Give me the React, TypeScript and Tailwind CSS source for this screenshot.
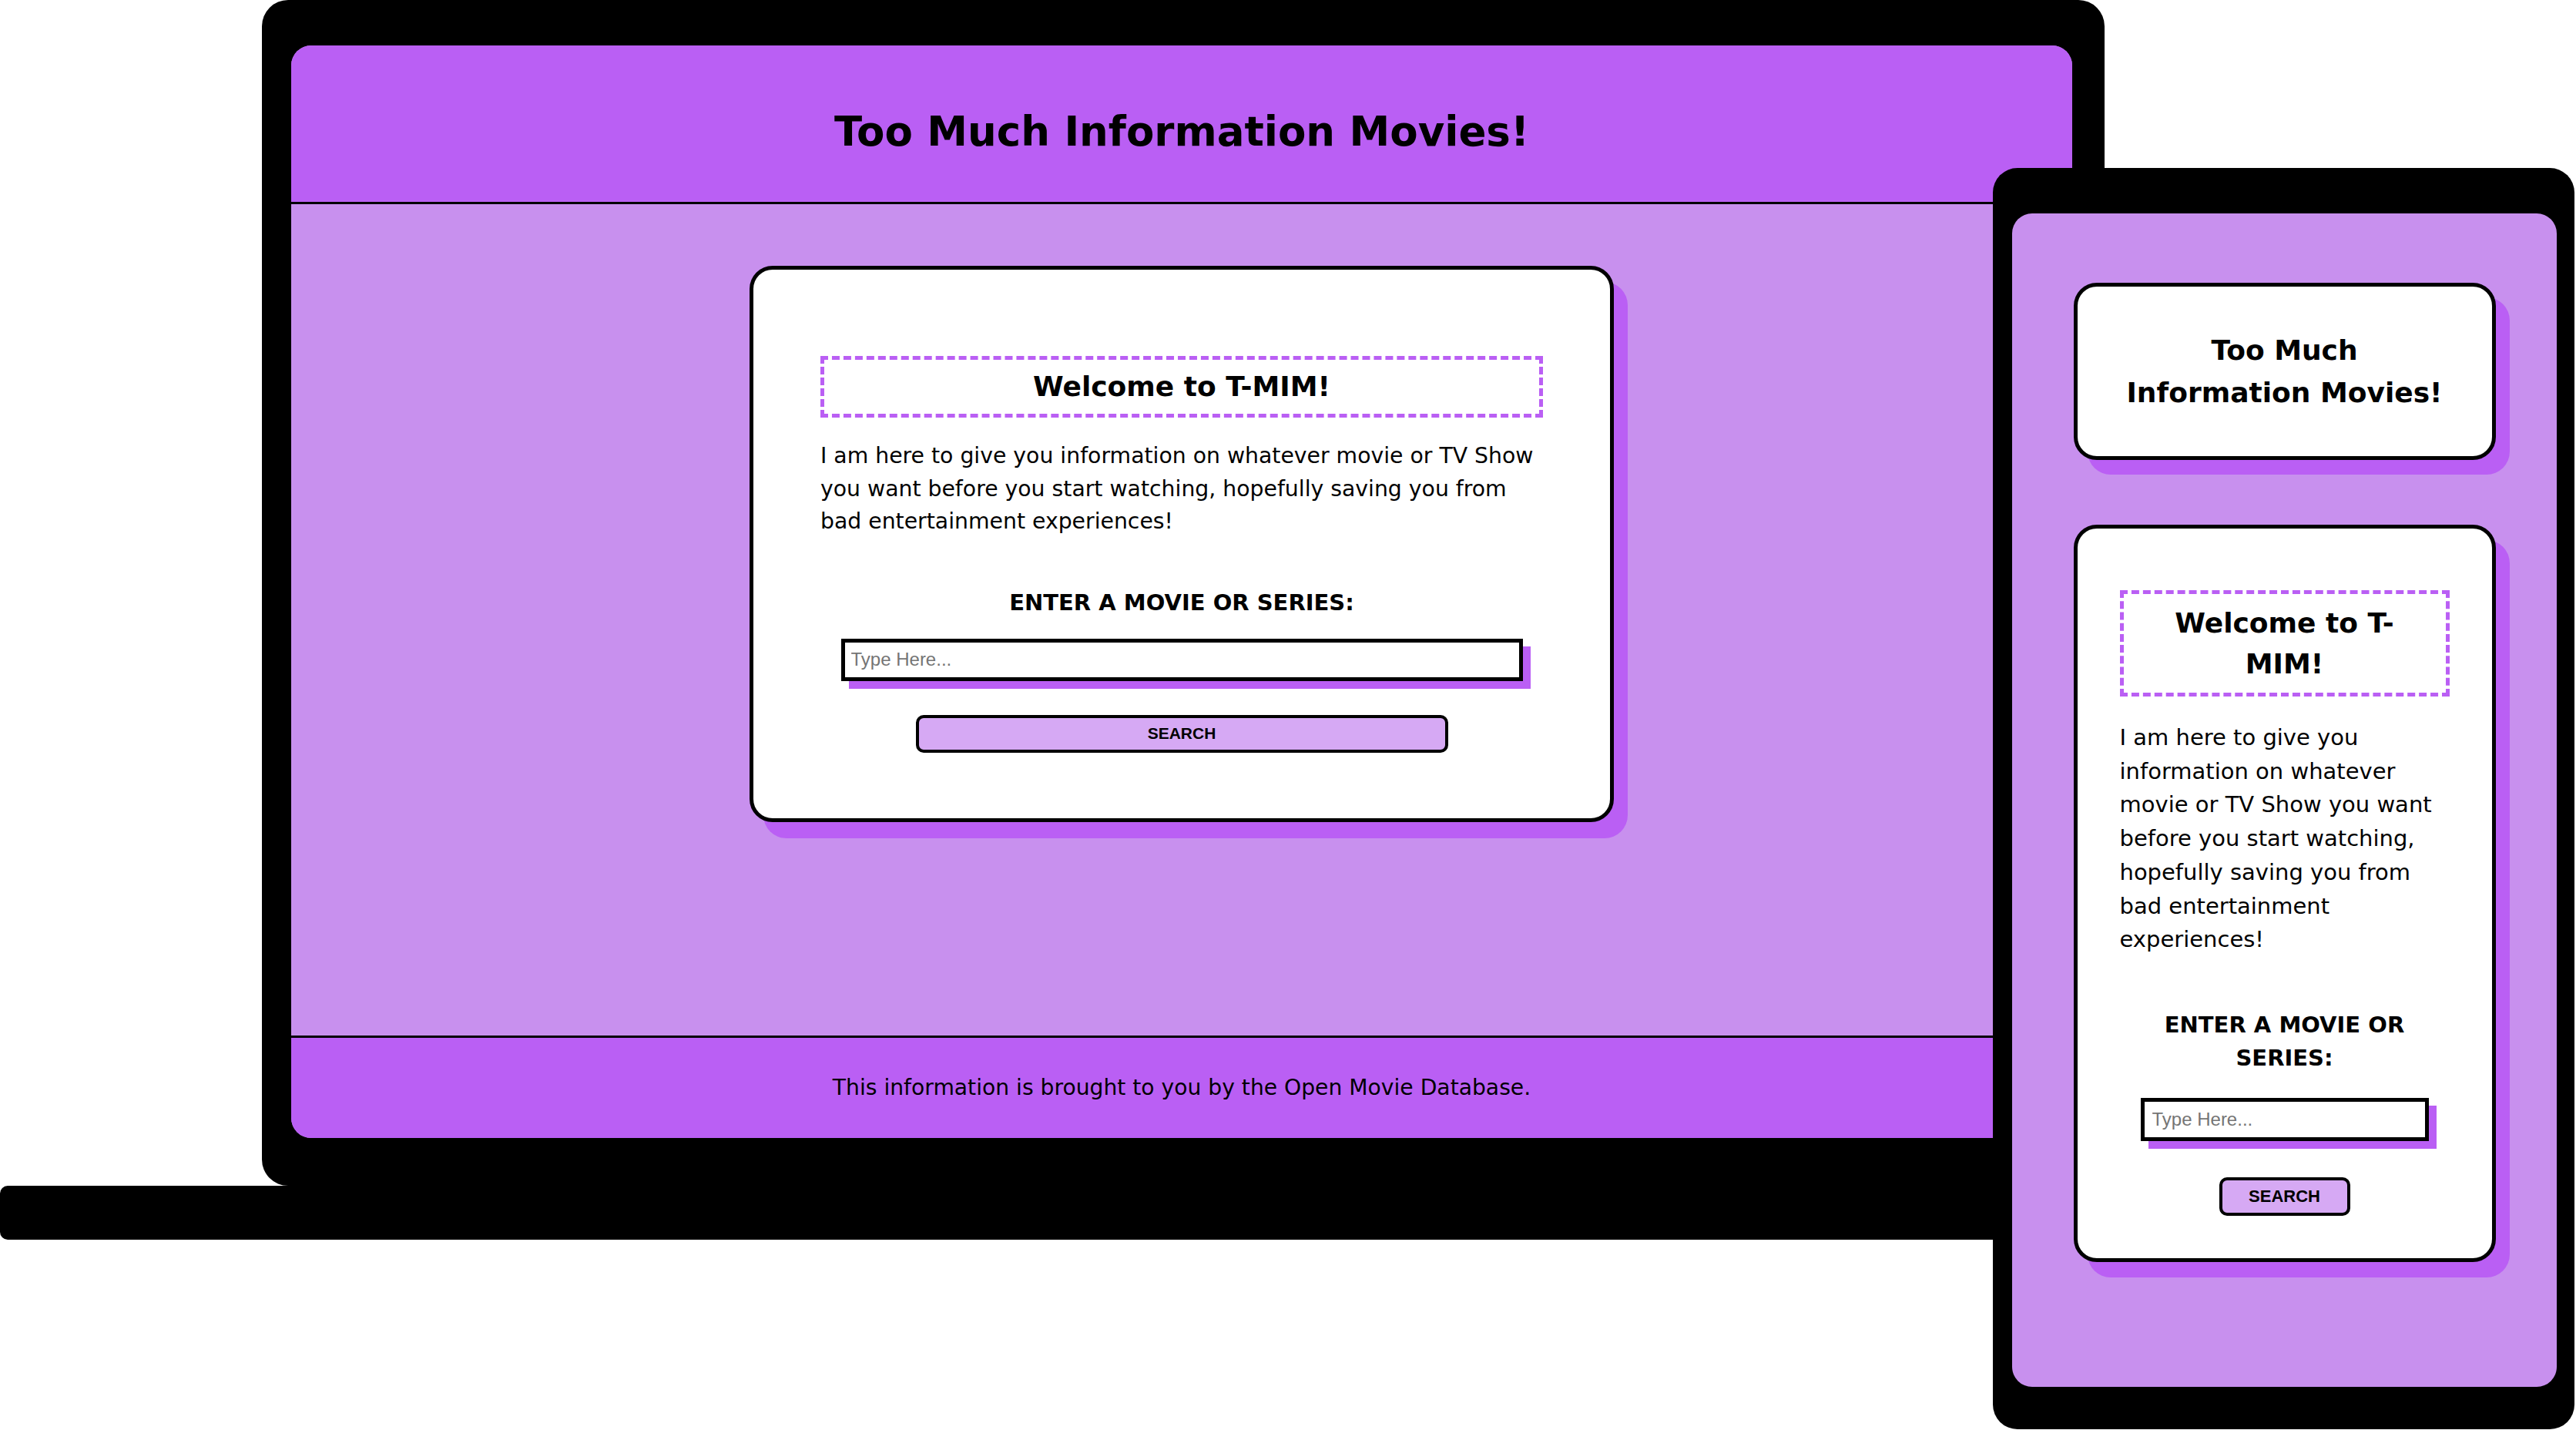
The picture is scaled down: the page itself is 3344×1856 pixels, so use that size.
import React from "react";

function LaptopCard() {
  return (
    <div className="flex w-[1122px] flex-col items-center self-start rounded-[30px] border-[5px] border-black bg-white px-[87px] pb-[85px] pt-[112px] shadow-[18px_21px_0_#ba5ff4]">
      <div className="w-full border-[5px] border-dashed border-[#ba5ff4] py-[10px] text-center text-[36px] font-bold leading-[50px]">
        Welcome to T-MIM!
      </div>
      <p className="mt-[29px] w-full text-left text-[28.3px] leading-[42.5px]">
        I am here to give you information on whatever movie or TV Show
        <br />
        you want before you start watching, hopefully saving you from
        <br />
        bad entertainment experiences!
      </p>
      <div className="mt-[62px] text-center text-[29px] font-bold leading-[42px]">ENTER A MOVIE OR SERIES:</div>
      <input
        type="text"
        placeholder="Type Here..."
        className="mt-[26px] h-[55px] w-[885px] border-[5px] border-black bg-white pl-[8px] font-['Liberation_Sans',Arial,sans-serif] text-[24px] shadow-[10px_10px_0_#ba5ff4] outline-none placeholder:text-[#757575]"
      />
      <button className="mt-[44px] h-[49px] w-[691px] rounded-[10px] border-4 border-black bg-[#d6a9f4] font-['Liberation_Sans',Arial,sans-serif] text-[21px] font-bold">
        SEARCH
      </button>
    </div>
  );
}

function PhoneCard() {
  return (
    <div className="mt-[84px] flex w-[548px] flex-col items-center rounded-[30px] border-[5px] border-black bg-white px-[55px] pb-[55px] pt-[80px] shadow-[18px_20px_0_#ba5ff4]">
      <div className="w-full border-[5px] border-dashed border-[#ba5ff4] px-[24px] py-[11px] text-center text-[36px] font-bold leading-[53px]">
        Welcome to T-MIM!
      </div>
      <p className="mt-[32px] w-full text-left text-[29px] leading-[43.7px]">
        I am here to give you
        <br />
        information on whatever
        <br />
        movie or TV Show you want
        <br />
        before you start watching,
        <br />
        hopefully saving you from
        <br />
        bad entertainment
        <br />
        experiences!
      </p>
      <div className="mt-[67px] text-center text-[29px] font-bold leading-[43.5px]">ENTER A MOVIE OR SERIES:</div>
      <input
        type="text"
        placeholder="Type Here..."
        className="mt-[29px] h-[56px] w-[374px] border-[5px] border-black bg-white pl-[10px] font-['Liberation_Sans',Arial,sans-serif] text-[24px] shadow-[10px_10px_0_#ba5ff4] outline-none placeholder:text-[#757575]"
      />
      <button className="mt-[47px] h-[50px] w-[170px] rounded-[10px] border-4 border-black bg-[#d6a9f4] font-['Liberation_Sans',Arial,sans-serif] text-[22px] font-bold">
        SEARCH
      </button>
    </div>
  );
}

export default function App() {
  return (
    <div className="relative h-[1856px] w-[3344px] overflow-hidden bg-white font-['DejaVu_Sans',Verdana,sans-serif] text-black">
      {/* laptop base */}
      <div className="absolute left-0 top-[1539px] h-[70px] w-[2640px] rounded-[10px] bg-black" />
      {/* laptop body */}
      <div className="absolute left-[340px] top-0 h-[1539px] w-[2392px] rounded-[34px] bg-black pb-[62px] pl-[38px] pr-[42px] pt-[59px]">
        <div className="flex h-full flex-col overflow-hidden rounded-[26px] bg-[#c890ee]">
          <header className="flex h-[206px] shrink-0 items-center justify-center border-b-[3px] border-black bg-[#ba5ff4] pt-[20px]">
            <h1 className="text-[53px] font-bold">Too Much Information Movies!</h1>
          </header>
          <main className="flex flex-1 justify-center pt-[80px]">
            <LaptopCard />
          </main>
          <footer className="flex h-[133px] shrink-0 items-center justify-center border-t-[3px] border-black bg-[#ba5ff4] text-[28.2px]">
            This information is brought to you by the Open Movie Database.
          </footer>
        </div>
      </div>
      {/* phone */}
      <div className="absolute left-[2587px] top-[218px] h-[1637px] w-[755px] rounded-[32px] bg-black pb-[55px] pl-[25px] pr-[23px] pt-[59px]">
        <div className="flex h-full flex-col items-center overflow-hidden rounded-[26px] bg-[#c890ee] pt-[90px]">
          <div className="flex h-[230px] w-[548px] items-center justify-center rounded-[30px] border-[5px] border-black bg-white px-[56px] text-center text-[36px] font-bold leading-[55px] shadow-[18px_19px_0_#ba5ff4]">
            Too Much Information Movies!
          </div>
          <PhoneCard />
        </div>
      </div>
    </div>
  );
}
